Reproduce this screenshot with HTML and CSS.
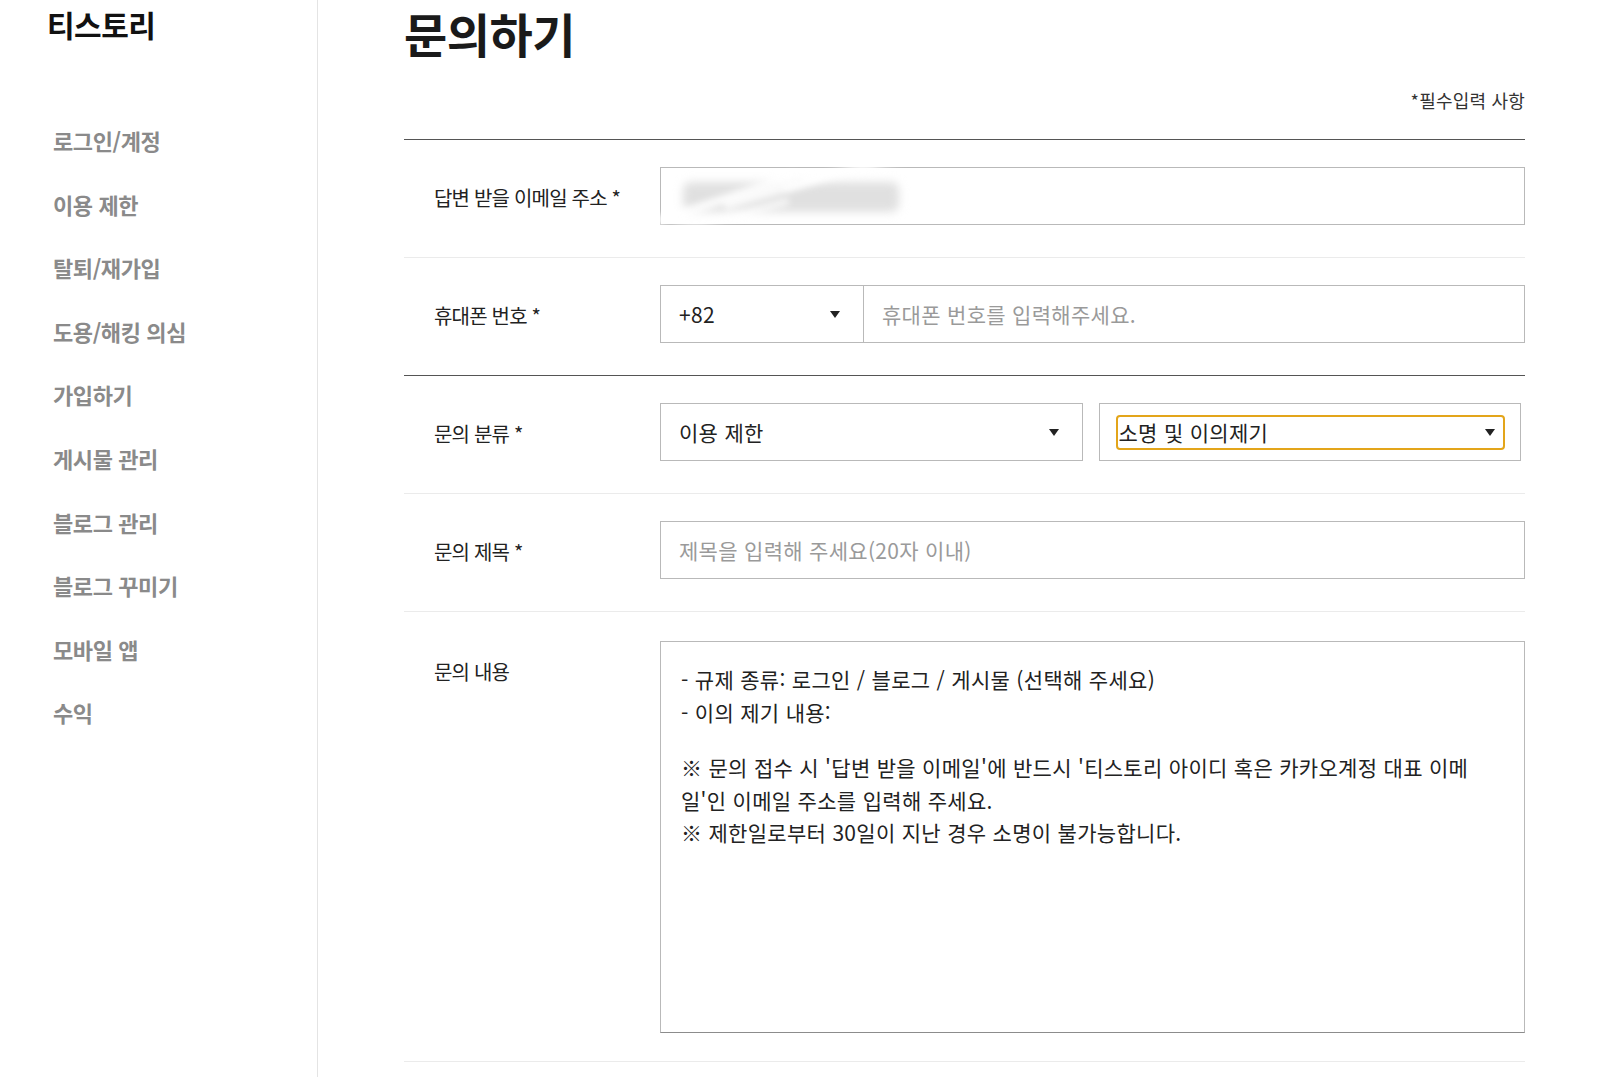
FILE: index.html
```html
<!DOCTYPE html>
<html lang="ko">
<head>
<meta charset="utf-8">
<title>문의하기 - 티스토리</title>
<link rel="stylesheet" href="styles.css">
</head>
<body>
<div class="page">
  <aside class="sidebar">
    <div class="logo">티스토리</div>
    <ul class="menu">
      <li>로그인/계정</li>
      <li>이용 제한</li>
      <li>탈퇴/재가입</li>
      <li>도용/해킹 의심</li>
      <li>가입하기</li>
      <li>게시물 관리</li>
      <li>블로그 관리</li>
      <li>블로그 꾸미기</li>
      <li>모바일 앱</li>
      <li>수익</li>
    </ul>
  </aside>
  <main class="main">
    <h1 class="title">문의하기</h1>
    <div class="required-note">*필수입력 사항</div>
    <div class="form">
      <div class="row">
        <div class="label">답변 받을 이메일 주소 *</div>
        <div class="field">
          <div class="box email">
            <div class="smudge">
              <span class="core"></span>
              <span class="w1"></span><span class="w2"></span><span class="w3"></span><span class="w4"></span>
            </div>
          </div>
        </div>
      </div>
      <div class="row">
        <div class="label">휴대폰 번호 *</div>
        <div class="field phone">
          <div class="box select country">
            <span>+82</span>
            <svg class="arrow" viewBox="0 0 10 7" width="10" height="7"><polygon points="0,0 10,0 5,7" fill="#222"/></svg>
          </div>
          <div class="box text placeholder">휴대폰 번호를 입력해주세요.</div>
        </div>
      </div>
      <div class="row section-start">
        <div class="label">문의 분류 *</div>
        <div class="field category">
          <div class="box select">
            <span>이용 제한</span>
            <svg class="arrow" viewBox="0 0 10 7" width="10" height="7"><polygon points="0,0 10,0 5,7" fill="#222"/></svg>
          </div>
          <div class="box select-wrap">
            <div class="focused">
              <span>소명 및 이의제기</span>
              <svg class="arrow" viewBox="0 0 10 7" width="10" height="7"><polygon points="0,0 10,0 5,7" fill="#222"/></svg>
            </div>
          </div>
        </div>
      </div>
      <div class="row">
        <div class="label">문의 제목 *</div>
        <div class="field">
          <div class="box text placeholder">제목을 입력해 주세요(20자 이내)</div>
        </div>
      </div>
      <div class="row top">
        <div class="label">문의 내용</div>
        <div class="field">
          <div class="box area">
            <p>- 규제 종류: 로그인 / 블로그 / 게시물 (선택해 주세요)<br>- 이의 제기 내용:</p>
            <p>※ 문의 접수 시 '답변 받을 이메일'에 반드시 '티스토리 아이디 혹은 카카오계정 대표 이메일'인 이메일 주소를 입력해 주세요.<br>※ 제한일로부터 30일이 지난 경우 소명이 불가능합니다.</p>
          </div>
        </div>
      </div>
    </div>
  </main>
</div>
</body>
</html>
```
FILE: styles.css
```css
* { box-sizing: border-box; }
html, body { margin: 0; padding: 0; background: #fff; }
body {
  font-family: "Noto Sans CJK KR", "Noto Sans", sans-serif;
  color: #222;
  width: 1600px;
  height: 1077px;
  overflow: hidden;
}
.page {
  display: flex;
  height: 1077px;
}
.sidebar {
  width: 318px;
  flex: none;
  border-right: 1px solid #e4e4e4;
  padding: 2px 0 0 47px;
}
.logo {
  font-size: 30px;
  font-weight: 700;
  line-height: 44px;
  color: #111;
  letter-spacing: -0.5px;
}
.menu {
  list-style: none;
  margin: 0;
  padding: 79px 0 0 6px;
}
.menu li {
  font-size: 22px;
  font-weight: 700;
  color: #8a8a8a;
  line-height: 30px;
  height: 63.6px;
  letter-spacing: -0.4px;
}
.main {
  width: 1207px;
  padding-left: 86px;
  display: flex;
  flex-direction: column;
}
.title {
  margin: 0;
  font-size: 47px;
  font-weight: 700;
  line-height: 60px;
  padding-top: 3px;
  color: #1a1a1a;
  letter-spacing: -0.5px;
}
.required-note {
  text-align: right;
  font-size: 18px;
  line-height: 24px;
  margin-top: 25px;
  padding-bottom: 27px;
  color: #333;
  letter-spacing: 0.2px;
}
.form {
  width: 1121px;
  border-top: 1px solid #555;
}
.row {
  display: grid;
  grid-template-columns: 256px 1fr;
  align-items: center;
  padding: 27px 0 32px;
  border-bottom: 1px solid #ebebeb;
}
.row.section-start { border-top: 1px solid #555; margin-top: -1px; }
.row.top { align-items: start; padding: 29px 0 28px; }
.label {
  padding: 4px 0 0 30px;
  font-size: 20px;
  letter-spacing: -0.8px;
  color: #222;
  line-height: 28px;
}
.row.top .label { padding-top: 17px; }
.box {
  border: 1px solid #b9b9b9;
  height: 58px;
  display: flex;
  align-items: center;
  font-size: 21px;
  letter-spacing: 0.3px;
  color: #222;
}
.email { position: relative; }
.smudge {
  position: absolute;
  left: 0;
  top: -10px;
  width: 260px;
  height: 78px;
  filter: blur(3px);
}
.smudge span {
  position: absolute;
  border-radius: 8px;
}
.smudge .core { left: 22px; top: 24px; width: 216px; height: 30px; background: #e0e0e0; filter: blur(3px); }
.smudge .w1 { left: -10px; top: 36px; width: 150px; height: 9px; background: #fff; opacity: 0.85; transform: rotate(-18deg); }
.smudge .w2 { left: 60px; top: 22px; width: 160px; height: 8px; background: #fff; opacity: 0.8; transform: rotate(-16deg); }
.smudge .w3 { left: 120px; top: 12px; width: 130px; height: 7px; background: #fff; opacity: 0.8; transform: rotate(-15deg); }
.smudge .w4 { left: 10px; top: 54px; width: 120px; height: 7px; background: #fff; opacity: 0.7; transform: rotate(-14deg); }
.phone {
  display: flex;
}
.country {
  width: 203px;
  flex: none;
  border-right: none;
}
.phone .text { flex: 1; }
.select {
  justify-content: space-between;
  padding: 0 23px 0 18px;
}
.text { padding: 0 18px; }
.placeholder { color: #9a9a9a; }
.arrow { display: block; flex: none; }
.category {
  display: grid;
  grid-template-columns: 1fr 1fr;
  column-gap: 16px;
  width: 861px;
}
.select-wrap {
  padding: 0 15px 0 16px;
}
.focused {
  flex: 1;
  height: 35px;
  border: 2px solid #e3a51a;
  border-radius: 4px;
  display: flex;
  align-items: center;
  justify-content: space-between;
  padding: 0 8px 0 1px;
}
.area {
  height: 392px;
  display: block;
  padding: 21px 46px 0 20px;
  border-bottom-color: #8c8c8c;
  line-height: 32.5px;
}
.area p { margin: 0 0 23px; }
```
